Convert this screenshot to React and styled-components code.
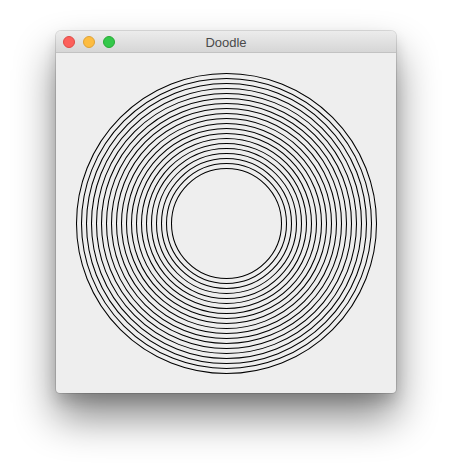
import React from "react";
import styled, { createGlobalStyle } from "styled-components";

const radii = Array.from({ length: 20 }, (_, i) => 55 + i * 5);

const lights = ["#fc605b", "#fdbc40", "#34c84a"];
const lightBorders = ["#de4a45", "#dea236", "#27aa35"];

const App = () => {
  return (
    <>
      <GlobalStyle />
      <Desktop>
        <Window>
          <TitleBar>
            <Lights>
              {lights.map((c, i) => (
                <Light key={c} color={c} border={lightBorders[i]} />
              ))}
            </Lights>
            <Title>Doodle</Title>
          </TitleBar>
          <Canvas>
            <svg width="340" height="340" viewBox="0 0 340 340">
              {radii.map((r) => (
                <circle
                  key={r}
                  cx="170.5"
                  cy="170.5"
                  r={r}
                  fill="none"
                  stroke="#000"
                  strokeWidth="1.05"
                />
              ))}
            </svg>
          </Canvas>
        </Window>
      </Desktop>
    </>
  );
};

export default App;

const GlobalStyle = createGlobalStyle`
  html, body {
    margin: 0;
    padding: 0;
    background: #ffffff;
  }
`;

const Desktop = styled.div`
  width: 452px;
  height: 474px;
  box-sizing: border-box;
  padding: 31px 0 0 56px;
  background: #ffffff;
`;

const Window = styled.div`
  width: 340px;
  height: 362px;
  display: flex;
  flex-direction: column;
  border-radius: 5px 5px 4px 4px;
  overflow: hidden;
  background: #eeeeee;
  box-shadow: 0 0 0 1px rgba(0, 0, 0, 0.12), 0 24px 42px rgba(0, 0, 0, 0.48),
    0 8px 14px rgba(0, 0, 0, 0.14);
`;

const TitleBar = styled.div`
  height: 22px;
  flex-shrink: 0;
  position: relative;
  display: flex;
  align-items: center;
  justify-content: center;
  box-sizing: border-box;
  background: linear-gradient(#ececec, #d6d6d6);
  border-bottom: 1px solid #c2c2c2;
`;

const Lights = styled.div`
  position: absolute;
  left: 7px;
  top: 5px;
  display: flex;
  gap: 8px;
`;

const Light = styled.span`
  width: 12px;
  height: 12px;
  border-radius: 50%;
  box-sizing: border-box;
  background: ${(p) => p.color};
  border: 0.5px solid ${(p) => p.border};
`;

const Title = styled.span`
  font-family: "Liberation Sans", Arial, sans-serif;
  font-size: 13px;
  color: #4a4a4a;
  margin-top: 1px;
`;

const Canvas = styled.div`
  flex: 1;
  display: flex;
  svg {
    display: block;
  }
`;
